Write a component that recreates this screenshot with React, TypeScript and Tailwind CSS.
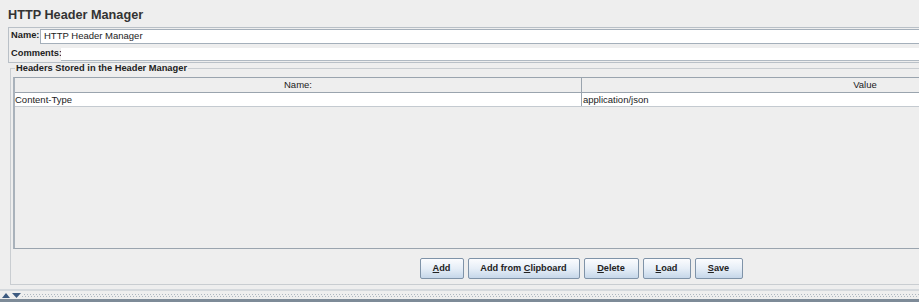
import React from "react";

const font = { fontFamily: '"Liberation Sans", Arial, sans-serif' };

function Btn({ w, pre, u, post }: { w: string; pre?: string; u: string; post?: string }) {
  return (
    <div
      className={`${w} h-[21px] flex items-center justify-center border border-[#7f93a8] rounded-[2px] bg-gradient-to-b from-[#fbfcfe] via-[#e6eef7] to-[#c6d7e9] text-[9.2px] font-bold text-[#222] leading-none`}
    >
      <span>
        {pre}
        <span className="underline underline-offset-[1px]">{u}</span>
        {post}
      </span>
    </div>
  );
}

export default function App() {
  return (
    <div
      className="w-[919px] h-[302px] overflow-hidden bg-[#eeeeee] flex flex-col text-[#222222]"
      style={font}
    >
      <div className="h-[27px] pl-[8px] pt-[8px] text-[12.7px] font-bold leading-[15px] text-[#333]">
        HTTP Header Manager
      </div>

      <div className="ml-[8px] w-[1160px] border border-[#b9c0c7] flex flex-col">
        <div className="h-[16px] flex items-center">
          <span className="pl-[2px] w-[31px] text-[9.3px] font-bold leading-none">Name:</span>
          <div className="flex-1 h-[15px] border border-[#a4afba] bg-white flex items-center pl-[3px] text-[9.5px] leading-none">
            HTTP Header Manager
          </div>
        </div>
        <div className="h-[18px] flex">
          <span className="pl-[2px] w-[52px] text-[9.3px] font-bold leading-none self-center pt-[2px]">
            Comments:
          </span>
          <div className="flex-1 mt-[4px] h-[13px] bg-white border-b border-[#b0b9c2]" />
        </div>
      </div>

      <div className="relative ml-[10px] mt-[5px] w-[1142px] h-[217px] border border-[#c9cdd1] flex flex-col">
        <span className="absolute left-[4px] top-[-6px] px-[1px] bg-[#eeeeee] text-[9.3px] font-bold leading-[11px]">
          Headers Stored in the Header Manager
        </span>
        <div className="ml-[2px] mt-[8px] w-[1136px] h-[172px] border border-[#9aa4ae] border-l-2 border-l-[#a9b2bb] flex flex-col">
          <div className="h-[15px] flex border-b border-[#9aa4ae] bg-[#eeeeee] text-[9.5px] leading-none">
            <div className="w-[567px] border-r border-[#9aa4ae] flex items-center justify-center">Name:</div>
            <div className="flex-1 flex items-center justify-center">Value</div>
          </div>
          <div className="h-[14px] flex bg-white border-b border-[#c4cad0] text-[9.5px] leading-none">
            <div className="w-[567px] border-r border-[#9aa4ae] flex items-center">Content-Type</div>
            <div className="flex-1 flex items-center pl-[1px]">application/json</div>
          </div>
        </div>
        <div className="mt-[9px] flex justify-center gap-[4px]">
          <Btn w="w-[44px]" u="A" post="dd" />
          <Btn w="w-[112px]" pre="Add from " u="C" post="lipboard" />
          <Btn w="w-[55px]" u="D" post="elete" />
          <Btn w="w-[48px]" u="L" post="oad" />
          <Btn w="w-[48px]" u="S" post="ave" />
        </div>
      </div>

      <div className="mt-auto h-[2px] bg-[#d5d9dd]" />
      <div className="h-[8px] relative flex items-center">
        <div className="absolute left-0 right-0 top-[3px] h-[1px] bg-[repeating-linear-gradient(90deg,#aeb7c0_0px,#aeb7c0_1px,transparent_1px,transparent_3px)]" />
        <div className="absolute left-[1px] right-0 top-[5px] h-[1px] bg-[repeating-linear-gradient(90deg,#aeb7c0_0px,#aeb7c0_1px,transparent_1px,transparent_3px)]" />
        <div className="relative flex items-center gap-[2px] pl-[2px] bg-[#eeeeee] pr-[1px]">
          <svg width="8" height="5" viewBox="0 0 8 5">
            <path d="M4 0 L8 5 L0 5 Z" fill="#3d5a80" />
          </svg>
          <svg width="9" height="5" viewBox="0 0 9 5">
            <path d="M0 0 L9 0 L4.5 5 Z" fill="#3d5a80" />
          </svg>
        </div>
      </div>
      <div className="h-[3px] bg-[#7e8b98]" />
    </div>
  );
}
